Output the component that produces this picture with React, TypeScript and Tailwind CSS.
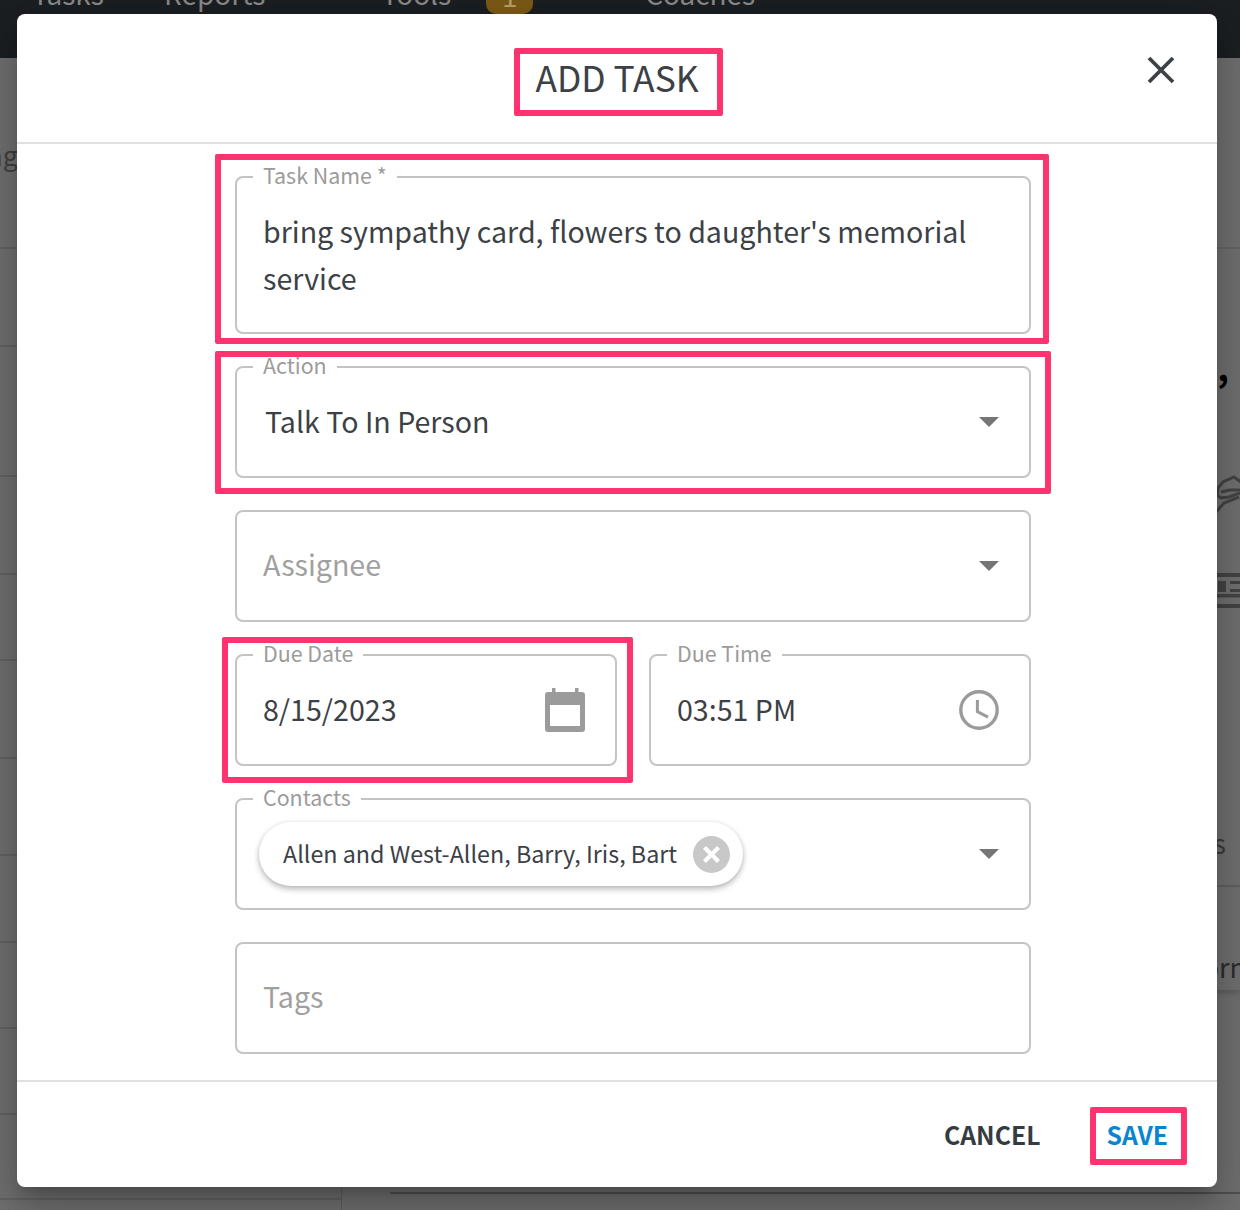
import type { ReactNode } from "react";

const leftRows = ["h-[191px]", "h-[98px]", "h-[130px]", "h-[98px]", "h-[86px]", "h-[98px]", "h-[97px]", "h-[87px]", "h-[86px]", "h-[86px]", "h-[85px]"];

function Caret() {
  return (
    <svg width="20" height="10" viewBox="0 0 20 10" className="shrink-0">
      <polygon points="0,0 20,0 10,10" fill="#757575" />
    </svg>
  );
}

function CalendarIcon() {
  return (
    <svg width="40" height="44" viewBox="0 0 40 44" className="shrink-0">
      <rect x="7" y="0" width="3.5" height="6" fill="#9b9b9b" />
      <rect x="30" y="0" width="3.5" height="6" fill="#9b9b9b" />
      <path
        fillRule="evenodd"
        d="M3 4h34a3 3 0 0 1 3 3v34a3 3 0 0 1-3 3H3a3 3 0 0 1-3-3V7a3 3 0 0 1 3-3zM5 17v21h30V17z"
        fill="#9b9b9b"
      />
    </svg>
  );
}

function ClockIcon() {
  return (
    <svg width="40" height="40" viewBox="0 0 40 40" className="shrink-0">
      <circle cx="20" cy="20" r="18.2" fill="none" stroke="#9b9b9b" strokeWidth="3.4" />
      <path d="M18.4 10v11.6l10.6 5.6" fill="none" stroke="#9b9b9b" strokeWidth="3" />
    </svg>
  );
}

function Field({
  label,
  height = "h-[112px]",
  className = "",
  children,
}: {
  label?: string;
  height?: string;
  className?: string;
  children: ReactNode;
}) {
  return (
    <div className={`relative rounded-lg border-2 border-[#c4c4c4] ${height} ${className}`}>
      {label && (
        <span className="absolute -top-[16px] left-[16px] bg-white px-[10px] text-[21.4px] leading-[26px] text-[#9b9b9b]">
          {label}
        </span>
      )}
      {children}
    </div>
  );
}

function Highlight({ className }: { className: string }) {
  return <div className={`pointer-events-none absolute rounded-[2px] border-[6px] border-[#ff3370] ${className}`} />;
}

export default function App() {
  return (
    <div className="relative h-[1210px] w-[1240px] overflow-hidden bg-[#707070] font-['Noto_Sans_CJK_SC',sans-serif]">
      {/* page behind the dialog */}
      <nav className="flex h-[58px] items-start overflow-hidden bg-[#1c1f22] text-[28px] leading-[30px] text-[#8a8a8a]">
        <span className="ml-[32px] -mt-[22px]">Tasks</span>
        <span className="ml-[60px] -mt-[22px]">Reports</span>
        <span className="ml-[116px] -mt-[22px]">Tools</span>
        <span className="ml-[35px] -mt-[20px] flex h-[34px] w-[47px] justify-center rounded-[10px] bg-[#7d5a17] text-[#b9a06d]">1</span>
        <span className="ml-[112px] -mt-[22px]">Coaches</span>
      </nav>
      <div className="flex h-[1152px]">
        <aside className="w-[342px] shrink-0 border-r border-[#5f5f5f]">
          {leftRows.map((row, i) => (
            <div key={i} className={`${row} border-b-2 border-[#636363] text-[27px] leading-[40px] text-[#3f3f3f]`}>
              {i === 0 && <p className="-ml-[240px] w-[258px] whitespace-nowrap pt-[77px] text-right">Something</p>}
            </div>
          ))}
        </aside>
        <main className="relative flex-1 text-[#2f2f2f]">
          <div className="h-[191px] border-b-2 border-[#666666]" />
          <div className="flex h-[638px] flex-col items-end border-b-2 border-[#636363]">
            <span className="mr-[11px] mt-[96px] h-[40px] text-[36px] font-bold leading-[40px] text-black">,</span>
            <svg width="24" height="38" viewBox="0 0 24 38" fill="none" stroke="#444444" strokeWidth="3" className="mt-[90px]">
              <path d="M25 7l-7-5-11 5-5 6-1 7 4 3 8-1 11-4" />
              <path d="M5 17l9-2h10" />
              <path d="M0 37l8-9 15-6" />
            </svg>
            <svg width="24" height="35" viewBox="0 0 24 35" className="mt-[60px] text-[#444444]">
              <rect x="0" y="0" width="24" height="4" fill="currentColor" />
              <rect x="2" y="8" width="8" height="11" fill="currentColor" />
              <rect x="14" y="8" width="10" height="3" fill="currentColor" />
              <rect x="14" y="16" width="10" height="3" fill="currentColor" />
              <rect x="0" y="21" width="24" height="3.5" fill="currentColor" />
              <rect x="0" y="31" width="24" height="4" fill="currentColor" />
            </svg>
            <span className="mr-[14px] mt-[218px] text-[27px] leading-[34px] text-[#3a3a3a]">s</span>
          </div>
          <div className="flex h-[103px] items-end justify-end overflow-hidden shadow-[0_3px_6px_rgba(0,0,0,0.18)]">
            <span className="-mr-[6px] mb-[6px] text-[27px] leading-[34px] text-[#2c2c2c]">orn</span>
          </div>
          <div className="ml-[48px] mt-[202px] h-[2px] bg-[#505050]" />
        </main>
      </div>

      {/* dialog */}
      <div className="absolute left-[17px] top-[14px] flex h-[1173px] w-[1200px] flex-col rounded-lg bg-white text-[#3c4146] shadow-[0_11px_15px_-7px_rgba(0,0,0,0.2),0_24px_38px_3px_rgba(0,0,0,0.14),0_9px_46px_8px_rgba(0,0,0,0.12)]">
        <header className="relative flex h-[130px] shrink-0 items-center justify-center border-b-2 border-[#e0e0e0]">
          <h1 className="-mt-[2px] text-[35.4px] leading-[48px]">ADD TASK</h1>
          <button className="absolute right-[42px] top-[42px]">
            <svg width="28" height="28" viewBox="0 0 28 28" className="block">
              <path d="M2 2l24 24M26 2L2 26" stroke="#3c4146" strokeWidth="3.8" fill="none" />
            </svg>
          </button>
        </header>

        <form className="flex flex-1 flex-col gap-8 pl-[218px] pt-[32px]">
          <div className="w-[796px]">
            <Field label="Task Name *" height="h-[158px]">
              <p className="px-[26px] pt-[30px] text-[28.6px] leading-[46.5px]">
                bring sympathy card, flowers to daughter's memorial service
              </p>
            </Field>
          </div>
          <div className="w-[796px]">
            <Field label="Action">
              <div className="flex h-full items-center justify-between pl-[28px] pr-[30px]">
                <span className="mb-[3px] text-[28.6px] leading-[40px]">Talk To In Person</span>
                <Caret />
              </div>
            </Field>
          </div>
          <div className="w-[796px]">
            <Field>
              <div className="flex h-full items-center justify-between pl-[26px] pr-[30px]">
                <span className="mb-[4px] text-[28.6px] leading-[40px] text-[#a0a0a0]">Assignee</span>
                <Caret />
              </div>
            </Field>
          </div>
          <div className="flex w-[796px] gap-8">
            <Field label="Due Date" className="flex-1">
              <div className="flex h-full items-center justify-between pl-[26px] pr-[30px]">
                <span className="mb-[3px] text-[28.6px] leading-[40px]">8/15/2023</span>
                <CalendarIcon />
              </div>
            </Field>
            <Field label="Due Time" className="flex-1">
              <div className="flex h-full items-center justify-between pl-[26px] pr-[30px]">
                <span className="mb-[3px] text-[28.6px] leading-[40px]">03:51 PM</span>
                <ClockIcon />
              </div>
            </Field>
          </div>
          <div className="w-[796px]">
            <Field label="Contacts">
              <div className="flex h-full items-center justify-between pl-[22px] pr-[30px]">
                <div className="flex h-[64px] w-[484px] items-center justify-between rounded-full bg-white pl-[24px] pr-[13px] shadow-[0_3px_6px_rgba(0,0,0,0.28),0_0_4px_rgba(0,0,0,0.06)]">
                  <span className="mb-[2px] whitespace-nowrap text-[23.3px] leading-[32px]">Allen and West-Allen, Barry, Iris, Bart</span>
                  <svg width="37" height="37" viewBox="0 0 37 37" className="shrink-0">
                    <circle cx="18.5" cy="18.5" r="18.5" fill="#c8c8c8" />
                    <path d="M11.5 11.5l14 14M25.5 11.5l-14 14" stroke="#ffffff" strokeWidth="4.2" fill="none" />
                  </svg>
                </div>
                <Caret />
              </div>
            </Field>
          </div>
          <div className="w-[796px]">
            <Field>
              <div className="flex h-full items-center pl-[26px]">
                <span className="mb-[4px] text-[28.6px] leading-[40px] text-[#a0a0a0]">Tags</span>
              </div>
            </Field>
          </div>
        </form>

        <footer className="flex h-[107px] shrink-0 items-center justify-end border-t-2 border-[#e0e0e0] pr-[49px] text-[24.8px] font-bold leading-[34px]">
          <button className="mb-[2px] text-[#343c42]">CANCEL</button>
          <button className="mb-[2px] ml-[66px] text-[#0a85d1]">SAVE</button>
        </footer>
      </div>

      {/* annotation boxes */}
      <Highlight className="left-[514px] top-[48px] h-[68px] w-[209px]" />
      <Highlight className="left-[215px] top-[154px] h-[190px] w-[834px]" />
      <Highlight className="left-[215px] top-[351px] h-[143px] w-[836px]" />
      <Highlight className="left-[222px] top-[637px] h-[146px] w-[411px]" />
      <Highlight className="left-[1090px] top-[1107px] h-[58px] w-[97px]" />
    </div>
  );
}
